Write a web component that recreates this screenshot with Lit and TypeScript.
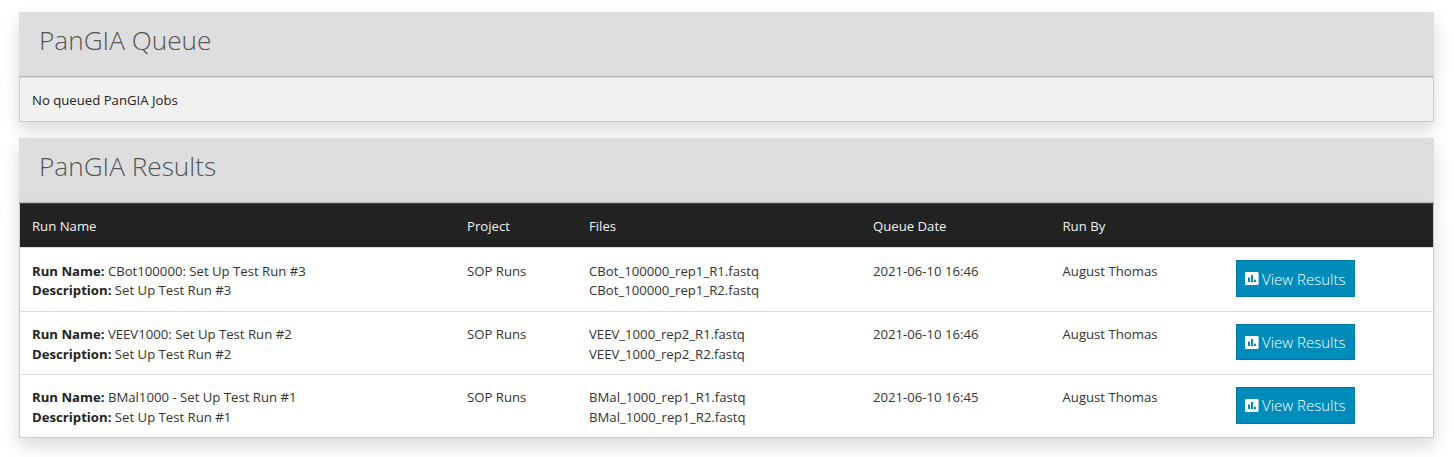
import { LitElement, html, css } from "lit";
import { customElement } from "lit/decorators.js";

interface Run {
  name: string;
  description: string;
  files: string[];
  date: string;
}

const RUNS: Run[] = [
  {
    name: "CBot100000: Set Up Test Run #3",
    description: "Set Up Test Run #3",
    files: ["CBot_100000_rep1_R1.fastq", "CBot_100000_rep1_R2.fastq"],
    date: "2021-06-10 16:46",
  },
  {
    name: "VEEV1000: Set Up Test Run #2",
    description: "Set Up Test Run #2",
    files: ["VEEV_1000_rep2_R1.fastq", "VEEV_1000_rep2_R2.fastq"],
    date: "2021-06-10 16:46",
  },
  {
    name: "BMal1000 - Set Up Test Run #1",
    description: "Set Up Test Run #1",
    files: ["BMal_1000_rep1_R1.fastq", "BMal_1000_rep1_R2.fastq"],
    date: "2021-06-10 16:45",
  },
];

@customElement("app-root")
export class AppRoot extends LitElement {
  static styles = css`
    :host {
      display: block;
      box-sizing: border-box;
      height: 457px;
      padding: 12px 20px 0 19px;
      background: #fff;
      overflow: hidden;
      font-family: "Open Sans", sans-serif;
      font-size: 13.17px;
      line-height: 19.6px;
      color: #333;
    }
    * {
      box-sizing: border-box;
    }
    .card + .card {
      margin-top: 16px;
    }
    .title,
    .body {
      position: relative;
      box-shadow: 0 8px 16px rgba(0, 0, 0, 0.15);
    }
    .title {
      margin: 0;
      height: 65px;
      padding: 10px 20px 0;
      background: #dedede;
      border-bottom: 1px solid #bbb;
      font-size: 26.2px;
      line-height: 36px;
      font-weight: 300;
      color: #555;
    }
    .body {
      border: 1px solid #ccc;
      border-top-color: #ddd;
      background: #fff;
    }
    .body.table {
      border-top-color: #444;
    }
    .empty {
      height: 43.2px;
      background: #f1f1f1;
      padding: 13px 12px 0;
      color: #222;
    }
    .row {
      display: grid;
      grid-template-columns: 435px 122px 284px 189.5px 173.5px 1fr;
      height: 63.35px;
      padding: 13.6px 12px 0;
      border-top: 1px solid #ddd;
    }
    .row.head {
      height: 43px;
      padding-top: 13px;
      background: #222;
      border-top: 0;
      color: #f1f1f1;
    }
    b {
      font-weight: 700;
      color: #222;
    }
    .button {
      display: flex;
      align-items: center;
      width: 119px;
      height: 36.8px;
      margin-top: -1.6px;
      padding: 1.4px 8px 0;
      border: 1px solid #007ba0;
      background: #008cba;
      color: #fff;
      font: 300 15px/19px "Open Sans", sans-serif;
      white-space: nowrap;
    }
    .button svg {
      flex: none;
      width: 14px;
      height: 14px;
      margin-right: 3px;
    }
  `;

  private renderRun(run: Run) {
    return html`<div class="row">
      <div>
        <b>Run Name:</b> ${run.name}<br />
        <b>Description:</b> ${run.description}
      </div>
      <div>SOP Runs</div>
      <div>${run.files.map((f) => html`<div>${f}</div>`)}</div>
      <div>${run.date}</div>
      <div>August Thomas</div>
      <div>
        <button class="button">
          <svg viewBox="0 0 14 14">
            <rect x="0" y="0" width="13.6" height="13" rx="1.3" fill="#fff" />
            <path d="M3 5.5h2V10H3zM6 3h2v7H6zM9 7.8h2V10H9z" fill="#008cba" />
          </svg>
          <span>View Results</span>
        </button>
      </div>
    </div>`;
  }

  render() {
    return html`
      <section class="card">
        <h2 class="title">PanGIA Queue</h2>
        <div class="body"><div class="empty">No queued PanGIA Jobs</div></div>
      </section>
      <section class="card">
        <h2 class="title">PanGIA Results</h2>
        <div class="body table">
          <div class="row head">
            <div>Run Name</div>
            <div>Project</div>
            <div>Files</div>
            <div>Queue Date</div>
            <div>Run By</div>
            <div></div>
          </div>
          ${RUNS.map((run) => this.renderRun(run))}
        </div>
      </section>
    `;
  }
}
